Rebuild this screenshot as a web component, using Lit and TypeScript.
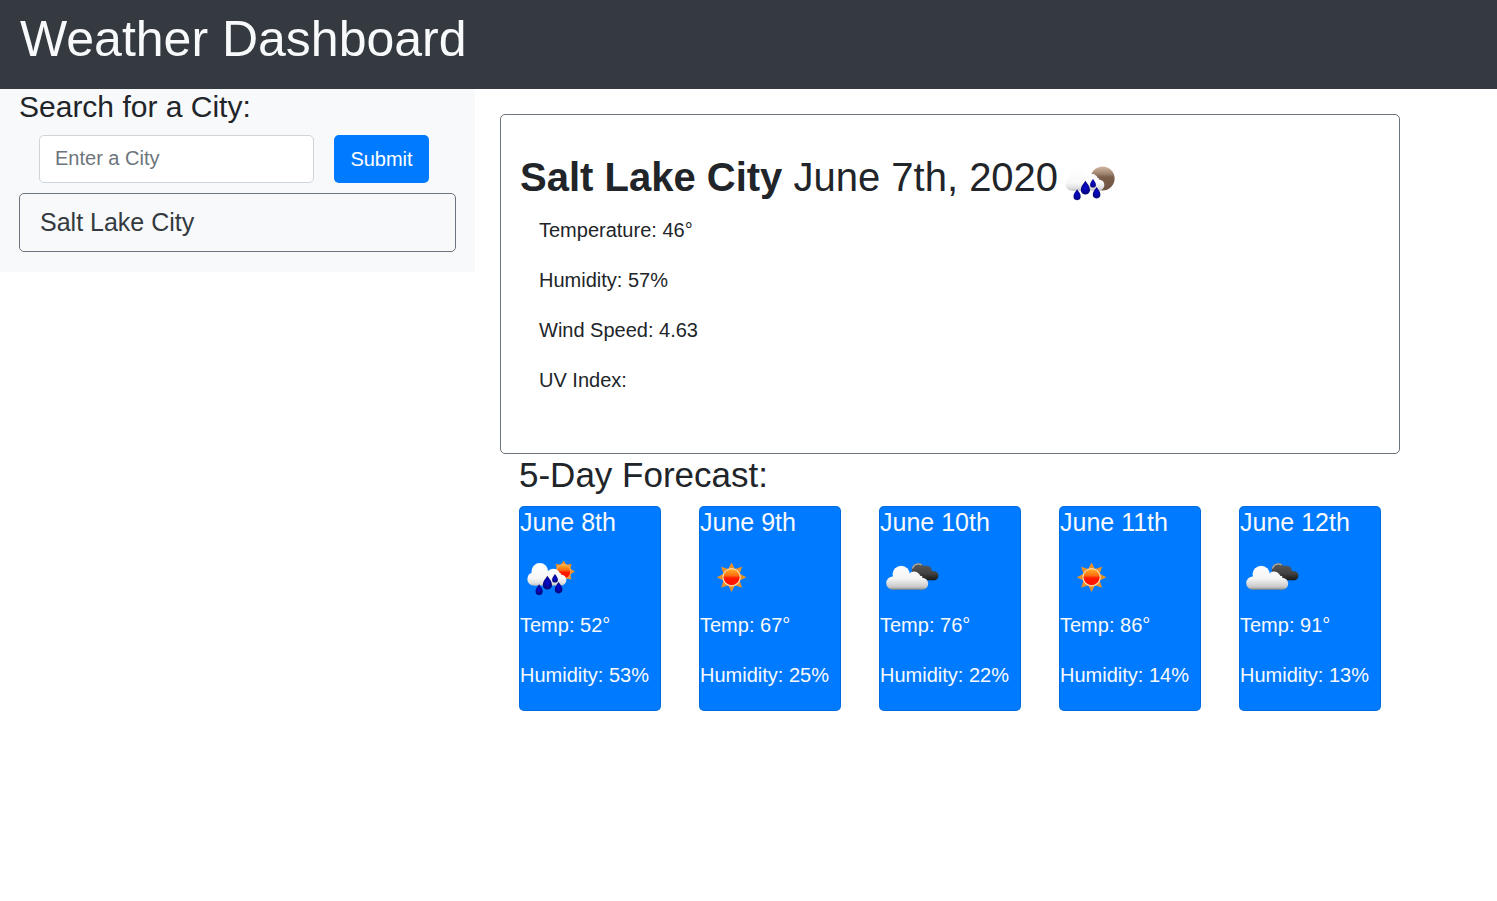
import { LitElement, html, svg, css } from "lit";
import { customElement, property, state } from "lit/decorators.js";

type IconName = "rain-night" | "rain-day" | "sun" | "clouds";

interface ForecastDay {
  date: string;
  icon: IconName;
  label: string;
  temp: number;
  humidity: number;
}

const FORECAST: ForecastDay[] = [
  { date: "June 8th", icon: "rain-day", label: "Rain", temp: 52, humidity: 53 },
  { date: "June 9th", icon: "sun", label: "Clear sky", temp: 67, humidity: 25 },
  { date: "June 10th", icon: "clouds", label: "Broken clouds", temp: 76, humidity: 22 },
  { date: "June 11th", icon: "sun", label: "Clear sky", temp: 86, humidity: 14 },
  { date: "June 12th", icon: "clouds", label: "Broken clouds", temp: 91, humidity: 13 },
];

/** Points of an eight-pointed star around (cx, cy). */
function star(cx: number, cy: number, outer: number, inner: number): string {
  const points: string[] = [];
  for (let i = 0; i < 16; i++) {
    const r = i % 2 ? inner : outer;
    const a = (Math.PI / 8) * i;
    points.push(`${(cx + r * Math.sin(a)).toFixed(2)},${(cy - r * Math.cos(a)).toFixed(2)}`);
  }
  return points.join(" ");
}

const drop = (x: number, y: number, r: number) => svg`
  <path fill="url(#drop)" d="M${x} ${y - r * 1.9}
    C${x + r * 0.5} ${y - r * 1.1} ${x + r} ${y - r * 0.7} ${x + r} ${y + r * 0.1}
    A${r} ${r} 0 0 1 ${x - r} ${y + r * 0.1}
    C${x - r} ${y - r * 0.7} ${x - r * 0.5} ${y - r * 1.1} ${x} ${y - r * 1.9}Z"/>`;

const rainCloud = svg`
  <g fill="url(#cloud)">
    <circle cx="14" cy="30.9" r="6.7"/>
    <circle cx="19.8" cy="23.4" r="8.3"/>
    <circle cx="33.3" cy="28.2" r="7.4"/>
    <circle cx="40.8" cy="32" r="5.6"/>
    <rect x="14" y="25" width="26.8" height="12.6"/>
  </g>
  ${drop(19.1, 43.2, 3.6)} ${drop(27.4, 36.5, 4.6)} ${drop(35, 31.4, 2.9)} ${drop(38.6, 41.2, 3.8)}`;

const ART = {
  "rain-night": svg`<circle cx="44.6" cy="25.4" r="12" fill="url(#moon)"/>${rainCloud}`,
  "rain-day": svg`
    <polygon points=${star(43.6, 23.6, 11.2, 7.4)} fill="#e8912a"/>
    <circle cx="43.6" cy="23.6" r="7.6" fill="#f9b56a"/>
    <circle cx="43.6" cy="23.6" r="6.8" fill="url(#sun)"/>
    ${rainCloud}`,
  sun: svg`
    <polygon points=${star(31.6, 29.2, 14.8, 8.8)} fill="#e8912a"/>
    <circle cx="31.6" cy="29.2" r="9.2" fill="#fbd9a8"/>
    <circle cx="31.6" cy="29.2" r="8" fill="url(#sun)"/>`,
  clouds: svg`
    <g fill="url(#dark)">
      <circle cx="38.3" cy="21.6" r="6.6"/>
      <circle cx="46" cy="23.4" r="6"/>
      <circle cx="54" cy="27.8" r="4.5"/>
      <rect x="36" y="23.3" width="18" height="9"/>
    </g>
    <path fill="none" stroke="#a8a8a8" stroke-width="1.5" d="M32.4 20.6 A6.2 6.2 0 0 1 41.6 16.8"/>
    <g fill="url(#cloud2)">
      <circle cx="12.8" cy="35.1" r="6.6"/>
      <circle cx="21.2" cy="26.3" r="8.6"/>
      <circle cx="34" cy="30.6" r="7"/>
      <circle cx="42.2" cy="35.7" r="6"/>
      <rect x="12.8" y="28" width="29.4" height="13.7"/>
    </g>`,
};

@customElement("weather-icon")
export class WeatherIcon extends LitElement {
  static styles = css`
    :host {
      display: block;
      flex: none;
      width: 62px;
      height: 62px;
    }
    .art {
      display: block;
      width: 100%;
      height: 100%;
    }
  `;

  @property() name: IconName = "sun";
  @property() label = "";

  render() {
    return html`
      <svg class="art" viewBox="0 0 62 62" role="img" aria-label=${this.label}>
        <defs>
          <linearGradient id="cloud" gradientUnits="userSpaceOnUse" x1="0" y1="15" x2="0" y2="38">
            <stop offset="0" stop-color="#ffffff" />
            <stop offset="0.65" stop-color="#f8f8f8" />
            <stop offset="0.88" stop-color="#dedee0" />
            <stop offset="1" stop-color="#b8b8bc" />
          </linearGradient>
          <linearGradient id="cloud2" gradientUnits="userSpaceOnUse" x1="0" y1="17" x2="0" y2="42">
            <stop offset="0" stop-color="#ffffff" />
            <stop offset="0.55" stop-color="#f4f4f4" />
            <stop offset="0.88" stop-color="#c8c8c8" />
            <stop offset="1" stop-color="#808080" />
          </linearGradient>
          <linearGradient id="dark" gradientUnits="userSpaceOnUse" x1="0" y1="15" x2="0" y2="33">
            <stop offset="0" stop-color="#5c5c5c" />
            <stop offset="0.6" stop-color="#404040" />
            <stop offset="1" stop-color="#141414" />
          </linearGradient>
          <linearGradient id="sun" x1="0" y1="0" x2="0" y2="1">
            <stop offset="0" stop-color="#ffb028" />
            <stop offset="0.4" stop-color="#ff6a10" />
            <stop offset="0.55" stop-color="#ff1a00" />
            <stop offset="1" stop-color="#ff1000" />
          </linearGradient>
          <linearGradient id="moon" x1="0" y1="0" x2="0" y2="1">
            <stop offset="0" stop-color="#d2b8a4" />
            <stop offset="0.3" stop-color="#a08570" />
            <stop offset="0.45" stop-color="#7a5e4a" />
            <stop offset="1" stop-color="#6e5443" />
          </linearGradient>
          <radialGradient id="drop">
            <stop offset="0" stop-color="#0808d8" />
            <stop offset="1" stop-color="#060678" />
          </radialGradient>
        </defs>
        ${ART[this.name]}
      </svg>
    `;
  }
}

@customElement("app-root")
export class AppRoot extends LitElement {
  static styles = css`
    :host {
      display: block;
      min-height: 100vh;
      background: #fff;
      color: #212529;
      font: 400 20px/30px "Liberation Sans", Arial, sans-serif;
    }
    * {
      box-sizing: border-box;
    }
    h1,
    h2,
    h3,
    p,
    ul {
      margin: 0;
      padding: 0;
      font-weight: 400;
    }
    ul {
      list-style: none;
    }
    .header {
      padding: 9px 20px 20px;
      background: #343a40;
      color: #f8f9fa;
    }
    .brand {
      font-size: 50px;
      line-height: 60px;
    }
    .layout {
      display: flex;
      align-items: flex-start;
      gap: 25px;
    }
    .sidebar {
      flex: 0 1 475px;
      min-width: 0;
      padding: 0 19px 20px;
      background: #f8f9fa;
    }
    .search-title {
      font-size: 30px;
      line-height: 36px;
    }
    .search {
      display: flex;
      gap: 20px;
      margin: 10px 0;
      padding: 0 27px 0 20px;
    }
    .field {
      flex: 1;
      min-width: 0;
      height: 48px;
      padding: 0 15px 2px;
      border: 1px solid #ced4da;
      border-radius: 5px;
      background: #fff;
      color: #495057;
      font: inherit;
    }
    .field::placeholder {
      color: #6c757d;
      opacity: 1;
    }
    .submit {
      min-width: 95px;
      height: 48px;
      padding: 0 16px;
      border: 0;
      border-radius: 5px;
      background: #007bff;
      color: #fff;
      font: inherit;
      cursor: pointer;
    }
    .city {
      display: block;
      width: 100%;
      padding: 10px 20px;
      border: 1px solid #6c757d;
      border-radius: 5px;
      background: transparent;
      color: #343a40;
      font: inherit;
      font-size: 25px;
      line-height: 37px;
      text-align: left;
      cursor: pointer;
    }
    .main {
      flex: 0 1 900px;
      min-width: 0;
      padding-top: 25px;
    }
    .current {
      padding: 38px 19px;
      border: 1px solid #6c757d;
      border-radius: 5px;
    }
    .current-head {
      display: flex;
      align-items: flex-start;
    }
    .current-title {
      font-size: 40px;
      line-height: 48px;
    }
    .readings {
      padding-left: 19px;
    }
    .readings li {
      margin-bottom: 20px;
    }
    .forecast {
      padding: 0 19px;
    }
    .forecast-title {
      margin-bottom: 10px;
      font-size: 35px;
      line-height: 42px;
    }
    .days {
      display: grid;
      grid-template-columns: repeat(5, 1fr);
      gap: 38px;
    }
    .day {
      border: 1px solid rgba(0, 0, 0, 0.125);
      border-radius: 5px;
      background: #007bff;
      color: #f8f9fa;
    }
    .day-date {
      margin-bottom: 10px;
      font-size: 25px;
      line-height: 31px;
    }
    .day p {
      margin-bottom: 20px;
      white-space: nowrap;
    }
  `;

  @state() private query = "";
  @state() private cities: string[] = ["Salt Lake City"];

  private onSubmit(event: Event) {
    event.preventDefault();
    const city = this.query.trim();
    if (city && !this.cities.includes(city)) {
      this.cities = [...this.cities, city];
    }
    this.query = "";
  }

  render() {
    return html`
      <header class="header"><h1 class="brand">Weather Dashboard</h1></header>
      <div class="layout">
        <aside class="sidebar">
          <h2 class="search-title"><label for="city">Search for a City:</label></h2>
          <form class="search" @submit=${this.onSubmit}>
            <input
              class="field"
              id="city"
              type="text"
              placeholder="Enter a City"
              .value=${this.query}
              @input=${(e: Event) => (this.query = (e.target as HTMLInputElement).value)}
            />
            <button class="submit" type="submit">Submit</button>
          </form>
          <ul>
            ${this.cities.map((c) => html`<li><button class="city" type="button">${c}</button></li>`)}
          </ul>
        </aside>
        <main class="main">
          <section class="current">
            <div class="current-head">
              <h2 class="current-title"><b>Salt Lake City</b> June 7th, 2020</h2>
              <weather-icon name="rain-night" label="Rain"></weather-icon>
            </div>
            <ul class="readings">
              <li>Temperature: 46°</li>
              <li>Humidity: 57%</li>
              <li>Wind Speed: 4.63</li>
              <li>UV Index:</li>
            </ul>
          </section>
          <section class="forecast">
            <h2 class="forecast-title">5-Day Forecast:</h2>
            <div class="days">
              ${FORECAST.map(
                (d) => html`
                  <article class="day">
                    <h3 class="day-date">${d.date}</h3>
                    <weather-icon name=${d.icon} label=${d.label}></weather-icon>
                    <p>Temp: ${d.temp}°</p>
                    <p>Humidity: ${d.humidity}%</p>
                  </article>
                `
              )}
            </div>
          </section>
        </main>
      </div>
    `;
  }
}
